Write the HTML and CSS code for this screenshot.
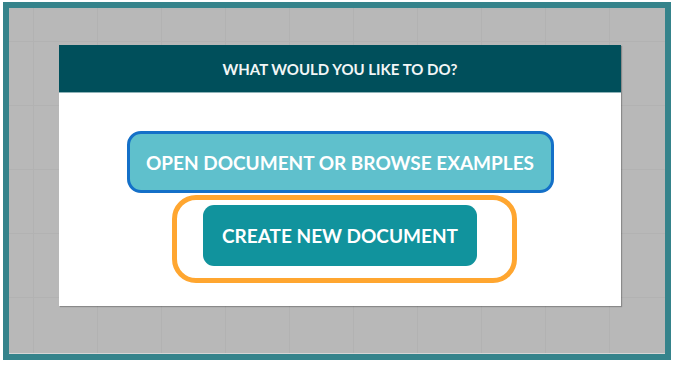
FILE: index.html
```html
<!DOCTYPE html>
<html lang="en">

<head>
    <meta charset="UTF-8">
    <meta name="viewport" content="width=device-width, initial-scale=1.0">
    <title>What would you like to do?</title>
    <link rel="stylesheet" href="styles.css">
</head>

<body>
    <div class="frame">
        <div class="dialog">
            <div class="dialog-header">WHAT WOULD YOU LIKE TO DO?</div>
            <div class="dialog-body">
                <button class="btn btn-open">OPEN DOCUMENT OR BROWSE EXAMPLES</button>
                <div class="focus-ring">
                    <button class="btn btn-create">CREATE NEW DOCUMENT</button>
                </div>
            </div>
        </div>
    </div>
</body>
</html>
```

FILE: styles.css
```css
body {
    margin: 0;
    padding: 0;
    background-color: #fff;
    font-family: Lato, "Open Sans", sans-serif;
}

.frame {
    margin: 2px 0 0 3px;
    width: 656px;
    height: 346px;
    border: 6px solid #35838b;
    background-color: #b8b8b8;
    background-image:
        linear-gradient(to right, #b2b2b2 1px, transparent 1px),
        linear-gradient(to bottom, #b2b2b2 1px, transparent 1px);
    background-size: 64px 64px;
    background-position: 24px 33px;
    box-shadow: inset 0 -1px 0 #d6d6d6;
    overflow: hidden;
}

.dialog {
    margin: 37px 0 0 50px;
    width: 562px;
    height: 261px;
    background-color: #fff;
    box-shadow: 1px 1px 1px rgba(0, 0, 0, 0.25);
}

.dialog-header {
    height: 48px;
    background-color: #004f5b;
    color: #f2f6f6;
    font-size: 15px;
    font-weight: 700;
    display: flex;
    align-items: center;
    justify-content: center;
    border-bottom: 1px solid #8fb3b8;
    box-sizing: border-box;
}

.dialog-body {
    padding-top: 38px;
    display: flex;
    flex-direction: column;
    align-items: center;
}

.btn {
    font-family: Lato, "Open Sans", sans-serif;
    font-weight: 700;
    font-size: 19px;
    color: #fff;
    border: none;
    cursor: pointer;
    box-sizing: border-box;
    padding: 0;
}

.btn-open {
    width: 427px;
    height: 62px;
    background-color: #5fc0cc;
    border: 3px solid #1470c8;
    border-radius: 14px;
}

.focus-ring {
    margin-top: 2px;
    margin-left: 9px;
    width: 345px;
    height: 88px;
    box-sizing: border-box;
    border: 5px solid #ffa630;
    border-radius: 24px;
    padding: 5px 35px 0 26px;
}

.btn-create {
    width: 274px;
    height: 61px;
    background-color: #11939d;
    border-radius: 11px;
}
```
